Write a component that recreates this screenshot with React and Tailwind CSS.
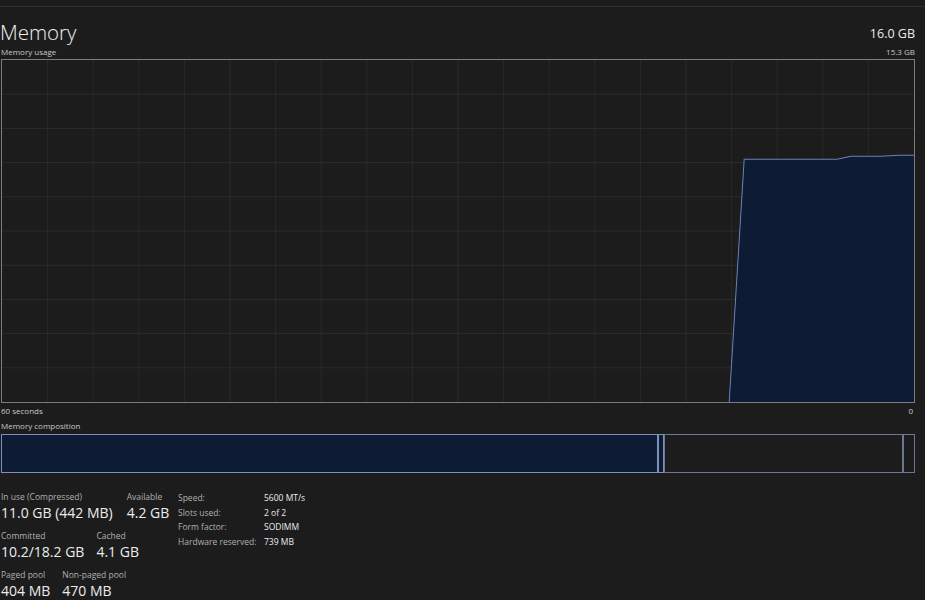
import React from 'react'

const font = { fontFamily: '"Open Sans", "Noto Sans", "Liberation Sans", sans-serif' }

function UsageGraph() {
    const w = 913
    const h = 341
    const cols = Array.from({ length: 19 }, (_, i) => ((i + 1) * w) / 20)
    const rows = Array.from({ length: 9 }, (_, i) => ((i + 1) * h) / 10)
    const pts = '728,341 743,99 836,99 850,96 880,96 898,95 913,95 913,341'
    return (
        <svg className="block w-full h-full" viewBox={`0 0 ${w} ${h}`} preserveAspectRatio="none">
            {cols.map(x => (
                <line key={'c' + x} x1={x} y1="0" x2={x} y2={h} stroke="#2a2a2a" strokeWidth="1" />
            ))}
            {rows.map(y => (
                <line key={'r' + y} x1="0" y1={y} x2={w} y2={y} stroke="#2a2a2a" strokeWidth="1" />
            ))}
            <polygon points={pts} fill="#0e1b34" />
            <polyline points="728,341 743,99 836,99 850,96 880,96 898,95 913,95" fill="none" stroke="#6a83b3" strokeWidth="1" />
        </svg>
    )
}

function Stat({ label, value }) {
    return (
        <div className="flex flex-col whitespace-nowrap">
            <span className="text-[8.5px] leading-[12px] text-[#b0b0b0]">{label}</span>
            <span className="text-[14px] leading-[20px] text-[#ececec]">{value}</span>
        </div>
    )
}

export default function App() {
    const specs = [
        ['Speed:', '5600 MT/s'],
        ['Slots used:', '2 of 2'],
        ['Form factor:', 'SODIMM'],
        ['Hardware reserved:', '739 MB'],
    ]
    return (
        <div className="w-[925px] h-[600px] bg-[#1c1c1c] overflow-hidden" style={font}>
            <div className="h-[7px] border-b border-[#2e2e2e]" />
            <div className="pl-[1px] pr-[10px]">
                {/* ── Header ── */}
                <div className="flex items-end justify-between mt-[10px]">
                    <h1 className="text-[20.5px] leading-[30px] font-light text-[#f0f0f0] -ml-[1px]">Memory</h1>
                    <span className="text-[12.5px] leading-[20px] text-[#ececec] mb-[3px]">16.0 GB</span>
                </div>
                <div className="flex justify-between text-[8px] leading-[12px] text-[#c8c8c8] -mt-[1px]">
                    <span>Memory usage</span>
                    <span>15.3 GB</span>
                </div>

                {/* ── Graph ── */}
                <div className="h-[344px] border border-[#7c7c7c] mt-[1px]">
                    <UsageGraph />
                </div>
                <div className="flex justify-between text-[8px] leading-[12px] text-[#c8c8c8] mt-[2px]">
                    <span>60 seconds</span>
                    <span className="pr-[2px]">0</span>
                </div>

                {/* ── Composition ── */}
                <div className="text-[8px] leading-[12px] text-[#c8c8c8] mt-[3px]">Memory composition</div>
                <div className="flex h-[39px] mt-[2px]">
                    <div className="w-[657px] bg-[#0e1b34] border border-[#7e91b6]" />
                    <div className="w-[6px] bg-[#0e1b34] border border-[#7e91b6]" />
                    <div className="flex-1 border border-[#6c7690]" />
                    <div className="w-[12px] border border-[#6c7690]" />
                </div>

                {/* ── Stats ── */}
                <div className="flex mt-[18px]">
                    <div className="flex flex-col gap-[7px] w-[177px] shrink-0">
                        <div className="flex gap-[14px]">
                            <Stat label="In use (Compressed)" value="11.0 GB (442 MB)" />
                            <Stat label="Available" value="4.2 GB" />
                        </div>
                        <div className="flex gap-[12px]">
                            <Stat label="Committed" value="10.2/18.2 GB" />
                            <Stat label="Cached" value="4.1 GB" />
                        </div>
                        <div className="flex gap-[12px]">
                            <Stat label="Paged pool" value="404 MB" />
                            <Stat label="Non-paged pool" value="470 MB" />
                        </div>
                    </div>
                    <div className="flex flex-col">
                        {specs.map(([k, v]) => (
                            <div key={k} className="flex text-[8.5px] leading-[14.5px] whitespace-nowrap">
                                <span className="w-[86px] text-[#b0b0b0]">{k}</span>
                                <span className="text-[#ececec]">{v}</span>
                            </div>
                        ))}
                    </div>
                </div>
            </div>
        </div>
    )
}
